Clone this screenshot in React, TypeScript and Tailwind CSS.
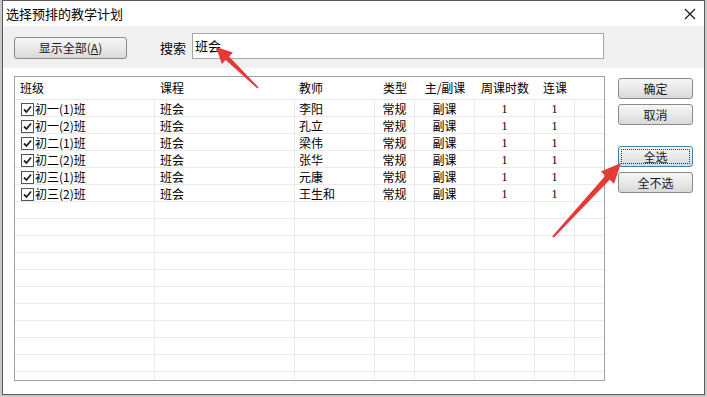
import React from 'react';

const font = { fontFamily: '"Noto Sans CJK SC", "Noto Sans", sans-serif' };

const rows = [
  { cls: '初一(1)班', course: '班会', teacher: '李阳' },
  { cls: '初一(2)班', course: '班会', teacher: '孔立' },
  { cls: '初二(1)班', course: '班会', teacher: '梁伟' },
  { cls: '初二(2)班', course: '班会', teacher: '张华' },
  { cls: '初三(1)班', course: '班会', teacher: '元康' },
  { cls: '初三(2)班', course: '班会', teacher: '王生和' },
];

const cols = 'grid grid-cols-[140px_140px_80px_40px_60px_60px_40px_1fr]';

function Btn({ label, focused = false, className = '' }: { label: React.ReactNode; focused?: boolean; className?: string }) {
  return (
    <div
      className={`relative flex items-center justify-center rounded-[3px] border text-[12px] text-[#1a1a1a] bg-gradient-to-b from-[#f6f6f6] via-[#e9e9e9] to-[#d9d9d9] ${focused ? 'border-[#3c7fb1]' : 'border-[#8a8a8a]'} ${className}`}
    >
      {focused && <div className="absolute inset-[2px] border border-dotted border-[#333]" />}
      <span className="relative">{label}</span>
    </div>
  );
}

function Check() {
  return (
    <div className="w-[13px] h-[13px] border border-[#555] bg-white flex items-center justify-center shrink-0">
      <svg width="9" height="9" viewBox="0 0 9 9">
        <path d="M1 4.5 L3.5 7 L8 1.5" fill="none" stroke="#222" strokeWidth="1.8" />
      </svg>
    </div>
  );
}

export default function App() {
  const blanks = Array.from({ length: 11 });
  return (
    <div className="relative w-[707px] h-[397px] bg-[#c9c9c9] overflow-hidden" style={font}>
      <div className="ml-[2px] w-[703px] h-[395px] border border-[#5a5a5a] bg-white flex flex-col">
        {/* title bar */}
        <div className="h-[25px] flex items-center justify-between pl-[3px] pr-[8px]">
          <span className="text-[13px] text-black">选择预排的教学计划</span>
          <svg width="12" height="12" viewBox="0 0 12 12">
            <path d="M1 1 L11 11 M11 1 L1 11" stroke="#111" strokeWidth="1.1" />
          </svg>
        </div>

        {/* toolbar */}
        <div className="h-[42px] bg-[#f0f0f0] flex items-start">
          <Btn label={<>显示全部(<span className="underline">A</span>)</>} className="ml-[11px] mt-[11px] w-[113px] h-[22px]" />
          <span className="ml-[33px] mt-[12px] text-[13px] text-black">搜索</span>
          <div className="ml-[6px] mt-[7px] w-[412px] h-[26px] border border-[#a6a6a6] bg-white flex items-center px-[2px] text-[13px] text-black">
            班会
          </div>
        </div>

        {/* content */}
        <div className="flex-1 flex items-start">
          <div className="ml-[11px] mt-[8px] w-[591px] h-[305px] border border-[#9aa3a8] bg-white overflow-hidden text-[12px] text-black">
            <div className={`${cols} h-[23px] items-center border-b border-[#e6e6e6]`}>
              <span className="pl-[5px]">班级</span>
              <span className="pl-[5px]">课程</span>
              <span className="pl-[4px]">教师</span>
              <span className="text-center">类型</span>
              <span className="text-center">主/副课</span>
              <span className="text-center">周课时数</span>
              <span className="text-center">连课</span>
              <span />
            </div>
            {rows.map((r) => (
              <div key={r.cls} className={`${cols} h-[17px] items-stretch border-b border-[#ebebeb]`}>
                <div className="flex items-center gap-[1px] pl-[6px] border-r border-[#ebebeb]">
                  <Check />
                  <span className="leading-none">{r.cls}</span>
                </div>
                <div className="flex items-center pl-[5px] border-r border-[#ebebeb]">{r.course}</div>
                <div className="flex items-center pl-[4px] border-r border-[#ebebeb]">{r.teacher}</div>
                <div className="flex items-center justify-center border-r border-[#ebebeb]">常规</div>
                <div className="flex items-center justify-center border-r border-[#ebebeb]">副课</div>
                <div className="flex items-center justify-center border-r border-[#ebebeb] font-['Liberation_Serif']">1</div>
                <div className="flex items-center justify-center border-r border-[#ebebeb] font-['Liberation_Serif']">1</div>
                <div />
              </div>
            ))}
            {blanks.map((_, i) => (
              <div key={i} className={`${cols} h-[17px] border-b border-[#ebebeb]`}>
                {Array.from({ length: 7 }).map((__, j) => (
                  <div key={j} className="border-r border-[#ebebeb]" />
                ))}
                <div />
              </div>
            ))}
          </div>

          <div className="ml-[13px] mt-[10px] flex flex-col">
            <Btn label="确定" className="w-[75px] h-[21px]" />
            <Btn label="取消" className="w-[75px] h-[21px] mt-[5px]" />
            <Btn label="全选" focused className="w-[75px] h-[21px] mt-[21px]" />
            <Btn label="全不选" className="w-[75px] h-[21px] mt-[5px]" />
          </div>
        </div>
      </div>

      {/* annotation arrows */}
      <svg className="absolute inset-0 pointer-events-none" width="707" height="397" viewBox="0 0 707 397">
        <polygon
          points="216,47 233,52.5 229.1,56.4 258.6,87.4 257.4,88.6 225.7,60 221.8,63.9"
          fill="#e53935"
        />
        <polygon
          points="621,163 614.1,183.8 609.7,179.7 553.7,237.7 552.3,236.3 605.3,175.7 600.9,171.6"
          fill="#e53935"
        />
      </svg>
    </div>
  );
}
